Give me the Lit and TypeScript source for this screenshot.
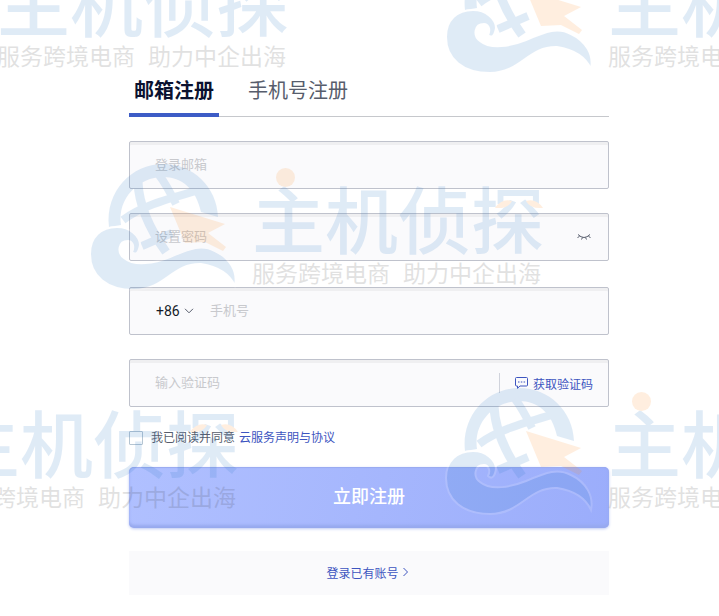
import { LitElement, html, css } from "lit";
import { customElement, state } from "lit/decorators.js";

@customElement("brand-watermark")
class BrandWatermark extends LitElement {
  static styles = css`
    :host {
      display: grid;
      grid-template-columns: 146px auto;
      column-gap: 16px;
      width: max-content;
      opacity: 0.14;
      pointer-events: none;
      user-select: none;
      white-space: nowrap;
      font-family: "Noto Sans CJK SC", sans-serif;
    }
    .emblem {
      display: block;
      width: 146px;
      height: 130px;
      overflow: visible;
    }
    .words {
      position: relative;
      padding-top: 16px;
    }
    .name {
      font-size: 73px;
      line-height: 80px;
      font-weight: 500;
      color: #2877c6;
    }
    .slogan {
      display: flex;
      gap: 13px;
      font-size: 23px;
      line-height: 32px;
      color: #303030;
    }
    .dot {
      position: absolute;
      left: 24px;
      top: 8px;
      width: 19px;
      height: 19px;
      border-radius: 50%;
      background: #ff8d22;
    }
    .eyes {
      position: absolute;
      left: 242px;
      top: 38px;
      width: 50px;
      height: 14px;
    }
  `;

  render() {
    return html`
      <svg class="emblem" viewBox="0 0 146 130" aria-hidden="true">
        <path
          d="M19 67C15 31 42 4 73 4C103 4 127 27 128 57L111 52C106 29 92 17 73 17C49 17 27 38 31 65Z"
          fill="#2877c6"
        />
        <g fill="none" stroke="#2877c6">
          <path d="M48 22C49 48 61 71 76 92" stroke-width="9" />
          <path d="M69 15C76 24 81 34 86 44" stroke-width="8" />
          <path d="M33 60C51 46 78 39 109 30" stroke-width="8" />
          <path d="M52 86L82 73" stroke-width="8" />
        </g>
        <path d="M80 47L135 64L118 73L136 87L133 91L115 82L95 83Z" fill="#ff8d22" />
        <path
          d="M0 94C0 77 11 67 27 67C40 67 50 76 50 85C49 92 46 96 42 92C45 86 42 81 38 81C28 81 27 93 34 98C45 107 65 103 80 97C101 88 112 84 125 91C140 98 148 112 145 126C140 115 130 107 111 104C82 103 75 130 44 130C17 130 0 116 0 94Z"
          fill="#2877c6"
          stroke="#ffffff"
          stroke-width="2"
        />
      </svg>
      <div class="words">
        <div class="name">主机侦探</div>
        <div class="slogan"><span>服务跨境电商</span><span>助力中企出海</span></div>
        <span class="dot"></span>
        <svg class="eyes" viewBox="0 0 50 14" aria-hidden="true">
          <path d="M1 10Q8 0 18 3Q14 11 1 10ZM49 10Q42 0 32 3Q36 11 49 10Z" fill="#ff8d22" />
        </svg>
      </div>
    `;
  }
}

@customElement("app-root")
class AppRoot extends LitElement {
  @state() private tab = "email";

  static styles = css`
    :host {
      display: block;
      position: relative;
      overflow: hidden;
      min-height: 100vh;
      box-sizing: border-box;
      background: #fff;
      font-family: "Liberation Sans", "Noto Sans CJK SC", sans-serif;
      font-size: 12px;
      color: #575d6c;
    }
    * {
      box-sizing: border-box;
    }
    button,
    input,
    select {
      font: inherit;
      margin: 0;
    }
    a {
      color: #3d55c0;
      text-decoration: none;
    }
    main {
      padding: 72px 110px 20px 129px;
    }
    .tabs {
      display: flex;
      gap: 24px;
      height: 45px;
      border-bottom: 1px solid #c6c8cc;
    }
    .tab {
      height: 45px;
      padding: 0 5px 4px;
      border: 0;
      border-bottom: 4px solid transparent;
      background: none;
      color: #575d6c;
      font-size: 20px;
      line-height: 32px;
    }
    .tab.active {
      color: #0b1230;
      font-weight: 700;
      border-bottom-color: #3d5cc6;
    }
    form {
      display: flex;
      flex-direction: column;
      padding-top: 24px;
    }
    .field {
      display: flex;
      align-items: center;
      height: 48px;
      margin-bottom: 24px;
      padding: 0 14px 0 25px;
      border: 1px solid #bfc2cc;
      border-radius: 2px;
      background: #fafafc;
      box-shadow: inset 0 3px 0 #efeff1;
    }
    .field.password {
      margin-bottom: 26px;
    }
    .field input {
      flex: 1;
      min-width: 0;
      height: 44px;
      padding: 0 0 2px;
      border: 0;
      outline: 0;
      background: none;
      color: #252b3a;
      font-size: 13px;
    }
    .field input::placeholder {
      color: #c8c9cd;
      opacity: 1;
    }
    .icon-button {
      display: flex;
      align-items: center;
      padding: 0;
      border: 0;
      background: none;
      color: #575d6c;
    }
    .country {
      display: grid;
      align-items: center;
      width: 55px;
    }
    .country select {
      grid-area: 1 / 1;
      appearance: none;
      width: 40px;
      padding: 0 0 0 1px;
      border: 0;
      background: none;
      color: #161a28;
      font-family: Roboto, sans-serif;
      font-size: 14px;
      line-height: 20px;
    }
    .country svg {
      grid-area: 1 / 1;
      margin-left: 29px;
      pointer-events: none;
    }
    .send {
      display: flex;
      align-items: center;
      gap: 5px;
      height: 20px;
      padding: 0 1px 0 15px;
      border: 0;
      border-left: 1px solid #d0d3dc;
      background: none;
      color: #3d55c0;
      font-size: 12px;
    }
    .agreement {
      display: flex;
      align-items: center;
      gap: 4px;
      height: 14px;
      margin-bottom: 22px;
    }
    .agreement label {
      display: flex;
      align-items: center;
      gap: 8px;
    }
    .agreement span,
    .agreement a {
      padding-bottom: 4px;
    }
    .agreement input {
      appearance: none;
      width: 14px;
      height: 14px;
      border: 1px solid #b5c5d2;
      border-radius: 1px;
      background: #fff;
    }
    .agreement input:checked {
      background: #3d5cc6;
    }
    .submit {
      height: 61px;
      padding: 0 0 5px;
      border: 0;
      border-radius: 5px;
      background: linear-gradient(100deg, #b0c0ff, #9badfb);
      box-shadow:
        inset 0 -3px 3px #97a9ee,
        inset 0 1px 1px #99aaf0,
        0 1px 3px #bdc8f4;
      color: #fff;
      font-size: 18px;
      font-weight: 500;
    }
    .login {
      display: flex;
      justify-content: center;
      align-items: center;
      gap: 3px;
      height: 44px;
      margin-top: 23px;
      padding: 0 3px 2px 0;
      background: #fafafc;
    }
    .marks {
      position: absolute;
      inset: 0;
      overflow: hidden;
      pointer-events: none;
    }
    .marks brand-watermark {
      position: absolute;
    }
    .center {
      left: 90px;
      top: 160px;
    }
    .upper-left {
      left: -165px;
      top: -57px;
    }
    .upper-right {
      left: 446px;
      top: -57px;
    }
    .lower-left {
      left: -215px;
      top: 384px;
    }
    .lower-right {
      left: 446px;
      top: 384px;
    }
  `;

  private renderTab(id: string, label: string) {
    return html`<button
      class="tab ${this.tab === id ? "active" : ""}"
      role="tab"
      aria-selected=${this.tab === id}
      @click=${() => (this.tab = id)}
    >${label}</button>`;
  }

  render() {
    return html`
      <main>
        <div class="tabs" role="tablist">
          ${this.renderTab("email", "邮箱注册")} ${this.renderTab("phone", "手机号注册")}
        </div>
        <form @submit=${(e: Event) => e.preventDefault()}>
          <div class="field">
            <input type="email" aria-label="登录邮箱" placeholder="登录邮箱" />
          </div>
          <div class="field password">
            <input type="password" aria-label="设置密码" placeholder="设置密码" />
            <button class="icon-button" type="button" aria-label="显示密码">
              <svg width="20" height="12" viewBox="0 0 20 12" fill="none" stroke="currentColor">
                <path d="M4 3.5Q10 9.5 16 3.5M5.500 5L3.500 7M8.500 6.500L7.500 8.500M11.500 6.500L12.500 8.500M14.500 5L16.500 7" />
              </svg>
            </button>
          </div>
          <div class="field">
            <div class="country">
              <select aria-label="国家码"><option>+86</option></select>
              <svg width="10" height="6" viewBox="0 0 10 6" fill="none" stroke="#575d6c">
                <path d="M1 .8L5 4.800L9 .8" />
              </svg>
            </div>
            <input type="tel" aria-label="手机号" placeholder="手机号" />
          </div>
          <div class="field">
            <input type="text" aria-label="输入验证码" placeholder="输入验证码" />
            <button class="send" type="button">
              <svg width="13" height="12" viewBox="0 0 13 12" fill="none" stroke="currentColor">
                <path d="M1.500 .5H11.500Q12.500 .5 12.500 1.500V8Q12.500 9 11.500 9H5L2.500 11.300V9H1.500Q.5 9 .5 8V1.500Q.5 .5 1.500 .5Z" />
                <path d="M3 5H4.500M5.800 5H7.300M8.600 5H10.100" />
              </svg>
              获取验证码
            </button>
          </div>
          <div class="agreement">
            <label><input type="checkbox" /><span>我已阅读并同意</span></label>
            <a href="#">云服务声明与协议</a>
          </div>
          <button class="submit" type="submit">立即注册</button>
        </form>
        <div class="login">
          <a href="#">登录已有账号</a>
          <svg width="7" height="10" viewBox="0 0 7 10" fill="none" stroke="#3d55c0">
            <path d="M1.500 1L5.500 5L1.500 9" />
          </svg>
        </div>
      </main>
      <div class="marks" aria-hidden="true">
        <brand-watermark class="center"></brand-watermark>
        <brand-watermark class="upper-left"></brand-watermark>
        <brand-watermark class="upper-right"></brand-watermark>
        <brand-watermark class="lower-left"></brand-watermark>
        <brand-watermark class="lower-right"></brand-watermark>
      </div>
    `;
  }
}
